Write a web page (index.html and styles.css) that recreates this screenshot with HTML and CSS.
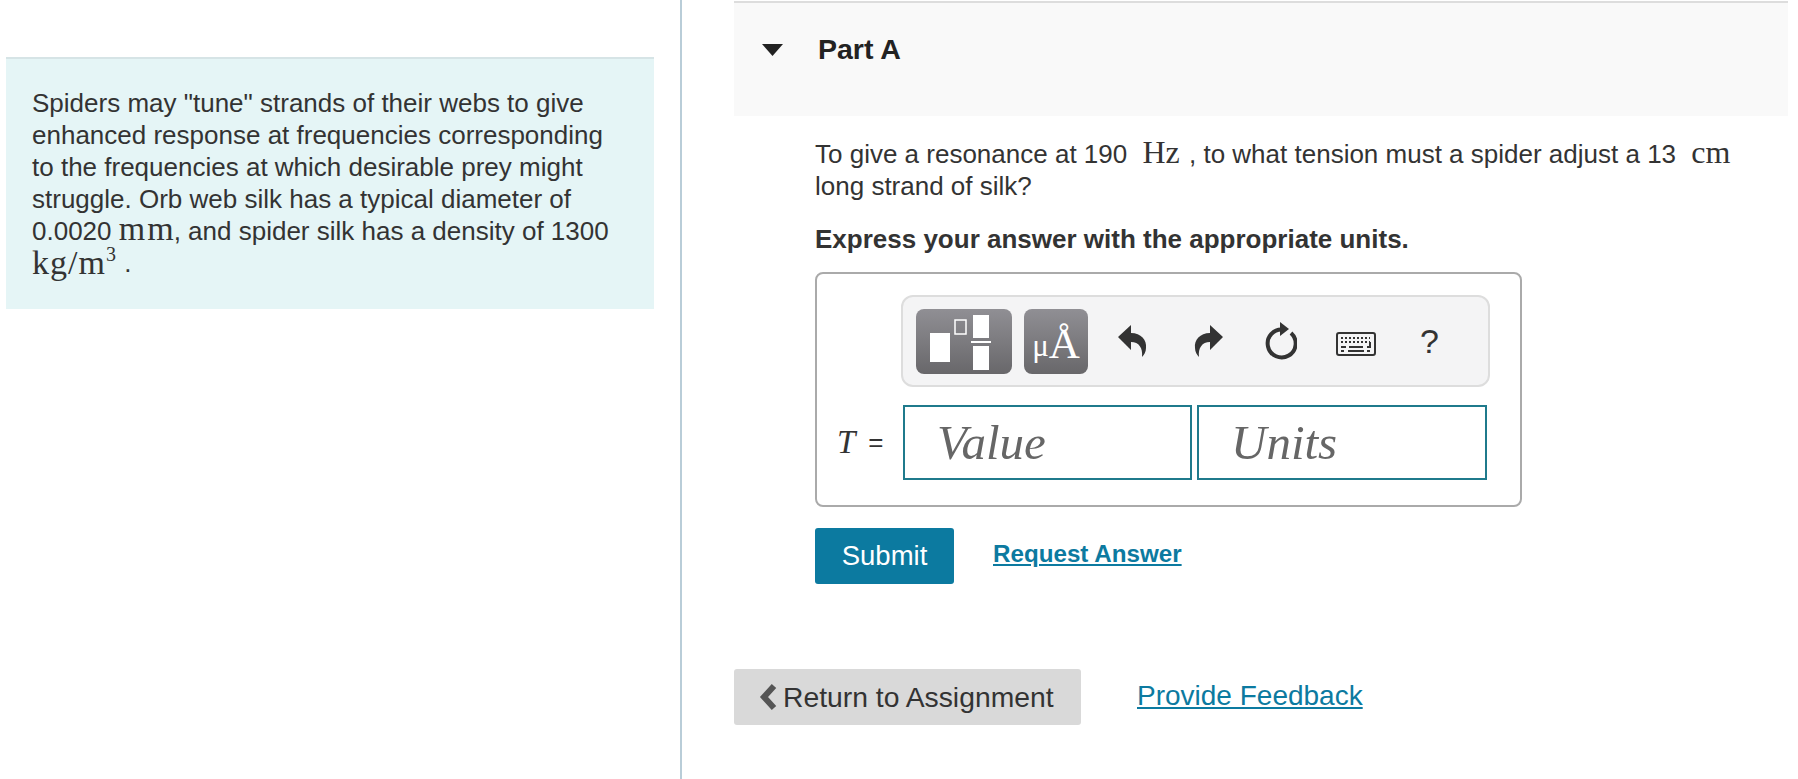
FILE: index.html
```html
<!DOCTYPE html>
<html lang="en">
<head>
    <meta charset="UTF-8">
    <title>Part A</title>
    <link rel="stylesheet" href="styles.css">
</head>
<body>
    <div class="page">
        <div class="left-pane">
            <div class="intro">
                Spiders may "tune" strands of their webs to give enhanced response at frequencies corresponding to the frequencies at which desirable prey might struggle. Orb web silk has a typical diameter of 0.0020 <span class="math math-mm">mm</span>, and spider silk has a density of 1300 <span class="math math-big">kg/m<sup>3</sup></span> .
            </div>
        </div>

        <div class="right-pane">
            <div class="part-header">
                <svg class="caret" width="21" height="12" viewBox="0 0 21 12"><path d="M0 0H21L10.5 12Z" fill="#222"/></svg>
                <span class="part-title">Part A</span>
            </div>

            <div class="part-body">
                <p class="question">To give a resonance at 190 <span class="math unit">Hz</span> , to what tension must a spider adjust a 13 <span class="math unit">cm</span> long strand of silk?</p>
                <p class="instruction">Express your answer with the appropriate units.</p>

                <div class="answer-box">
                    <div class="toolbar">
                        <div class="tool-btn tool-wide">
                            <svg width="96" height="65" viewBox="0 0 96 65">
                                <rect x="14" y="24" width="20" height="29" fill="#fff"/>
                                <rect x="39" y="11" width="11" height="14" fill="none" stroke="#fff" stroke-width="1.5"/>
                                <rect x="57" y="6" width="16" height="23" fill="#fff"/>
                                <rect x="55" y="32" width="20" height="2" fill="#fff"/>
                                <rect x="57" y="37" width="16" height="24" fill="#fff"/>
                            </svg>
                        </div>
                        <div class="tool-btn tool-unit"><span class="mu">μ</span><span class="angstrom">Å</span></div>
                        <svg class="tool-icon undo" width="30" height="34" viewBox="0 0 30 34"><path d="M1 13L14 1V9C24 9 30 16 29 24C29 28 27 31 25 33C26 24 22 18 14 18V26Z" fill="#333"/></svg>
                        <svg class="tool-icon redo" width="30" height="34" viewBox="0 0 30 34"><path d="M29 13L16 1V9C6 9 0 16 1 24C1 28 3 31 5 33C4 24 8 18 16 18V26Z" fill="#333"/></svg>
                        <svg class="tool-icon reload" width="34" height="38" viewBox="0 0 34 38">
                            <path d="M20 7.5A14 14 0 1 0 28 11" fill="none" stroke="#333" stroke-width="4"/>
                            <path d="M17 0L26 7L17 14Z" fill="#333"/>
                        </svg>
                        <svg class="tool-icon keyboard" width="40" height="24" viewBox="0 0 40 24">
                            <rect x="1" y="1" width="38" height="22" rx="2" fill="#f4f4f5" stroke="#333" stroke-width="2"/>
                            <path d="M5 6H34M5 10H34" stroke="#333" stroke-width="2" stroke-dasharray="2 2"/>
                            <path d="M5 15H10M13 15H27M31 15H34V10M5 19H8M12 19H28M31 19H34" stroke="#333" stroke-width="2" fill="none"/>
                        </svg>
                        <span class="tool-help">?</span>
                    </div>

                    <div class="input-row">
                        <div class="var-label"><i class="var-name">T</i><span class="var-eq">=</span></div>
                        <div class="field field-value">Value</div>
                        <div class="field field-units">Units</div>
                    </div>
                </div>

                <div class="actions">
                    <button class="submit-btn">Submit</button>
                    <a class="request-link" href="#">Request Answer</a>
                </div>
            </div>

            <div class="footer-row">
                <button class="return-btn">
                    <svg width="18" height="28" viewBox="0 0 18 28"><path d="M15 3L5 14L15 25" fill="none" stroke="#555" stroke-width="6"/></svg>
                    Return to Assignment
                </button>
                <a class="feedback-link" href="#">Provide Feedback</a>
            </div>
        </div>
    </div>
</body>
</html>
```

FILE: styles.css
```css
html, body {
    height: 100%;
}

body {
    margin: 0;
    font-family: "Liberation Sans", Arial, sans-serif;
    font-size: 26px;
    color: #333;
    background-color: #fff;
    overflow: hidden;
}

.page {
    display: flex;
    height: 100%;
}

.left-pane {
    width: 682px;
    flex-shrink: 0;
    padding-top: 57px;
    padding-left: 6px;
    box-sizing: border-box;
    border-right: 2px solid #b9cdd8;
}

.intro {
    width: 648px;
    height: 252px;
    box-sizing: border-box;
    padding: 28px 26px 0;
    line-height: 32px;
    background-color: #e5f5f6;
    border-top: 2px solid #d6e4e6;
}

.math {
    font-family: "Liberation Serif", serif;
    font-size: 32px;
    line-height: 0;
}

.math-mm {
    font-size: 34px;
    letter-spacing: 2px;
    margin-right: -2px;
}

.math-big {
    font-size: 34px;
    letter-spacing: 1px;
    vertical-align: -2px;
}

.math sup {
    font-size: 20px;
    line-height: 0;
    vertical-align: 13px;
}

.unit {
    margin: 0 2px 0 8px;
}

.right-pane {
    flex: 1;
    padding-left: 52px;
    padding-top: 1px;
    padding-right: 10px;
}

.part-header {
    display: flex;
    align-items: flex-start;
    height: 86px;
    padding-top: 27px;
    background-color: #f9f9f9;
    border-top: 2px solid #ddd;
}

.caret {
    margin-left: 28px;
    margin-top: 14px;
}

.part-title {
    margin-left: 35px;
    font-weight: bold;
    font-size: 28.5px;
    line-height: 38px;
    color: #222;
}

.part-body {
    padding-left: 81px;
}

.question {
    margin: 22px 0 0;
    line-height: 32px;
}

.instruction {
    margin: 21px 0 0;
    line-height: 32px;
    font-weight: bold;
}

.answer-box {
    width: 707px;
    height: 235px;
    box-sizing: border-box;
    margin-top: 17px;
    padding: 21px 0 0 84px;
    border: 2px solid #aaa;
    border-radius: 8px;
}

.toolbar {
    display: flex;
    align-items: center;
    width: 589px;
    height: 92px;
    box-sizing: border-box;
    padding-left: 13px;
    background-color: #f4f4f5;
    border: 2px solid #ddd;
    border-radius: 12px;
}

.tool-btn {
    height: 65px;
    border-radius: 8px;
    background: linear-gradient(#908f94, #68676a);
    color: #fff;
}

.tool-wide {
    width: 96px;
}

.tool-unit {
    display: flex;
    justify-content: center;
    align-items: flex-end;
    width: 64px;
    margin-left: 12px;
    padding-bottom: 10px;
    height: 55px;
    font-family: "Liberation Serif", serif;
}

.mu {
    font-size: 31px;
}

.angstrom {
    font-size: 43px;
    line-height: 40px;
}

.undo {
    margin-left: 29px;
}

.redo {
    margin-left: 47px;
}

.reload {
    margin-left: 39px;
}

.keyboard {
    margin-left: 39px;
    margin-top: 6px;
}

.tool-help {
    margin-left: 44px;
    font-size: 34px;
    color: #333;
}

.input-row {
    display: flex;
    align-items: center;
    margin-left: -84px;
    margin-top: 18px;
}

.var-label {
    display: flex;
    align-items: center;
    width: 86px;
    box-sizing: border-box;
    padding-left: 20px;
}

.var-name {
    font-family: "Liberation Serif", serif;
    font-size: 33px;
}

.var-eq {
    margin-left: 13px;
    font-size: 26px;
}

.field {
    height: 75px;
    box-sizing: border-box;
    padding-left: 32px;
    border: 2px solid #1f7a8c;
    font-family: "Liberation Serif", serif;
    font-style: italic;
    font-size: 49px;
    line-height: 71px;
    color: #666;
}

.field-value {
    width: 289px;
}

.field-units {
    width: 290px;
    margin-left: 5px;
}

.actions {
    display: flex;
    align-items: flex-start;
    margin-top: 21px;
}

.submit-btn {
    width: 139px;
    height: 56px;
    padding: 0;
    border: none;
    border-radius: 3px;
    font-family: inherit;
    font-size: 27.5px;
    color: #fff;
    background-color: #0c7aa0;
}

.request-link {
    margin-left: 39px;
    margin-top: 12px;
    font-weight: bold;
    font-size: 24.2px;
    color: #0c7aa0;
}

.footer-row {
    display: flex;
    align-items: flex-start;
    margin-top: 85px;
}

.return-btn {
    display: flex;
    align-items: center;
    gap: 6px;
    width: 347px;
    height: 56px;
    padding: 0 0 0 25px;
    border: none;
    border-radius: 3px;
    font-family: inherit;
    font-size: 28.3px;
    color: #333;
    background-color: #d9d9d9;
}

.feedback-link {
    margin-left: 56px;
    margin-top: 11px;
    font-size: 28px;
    color: #0c7aa0;
}
```
